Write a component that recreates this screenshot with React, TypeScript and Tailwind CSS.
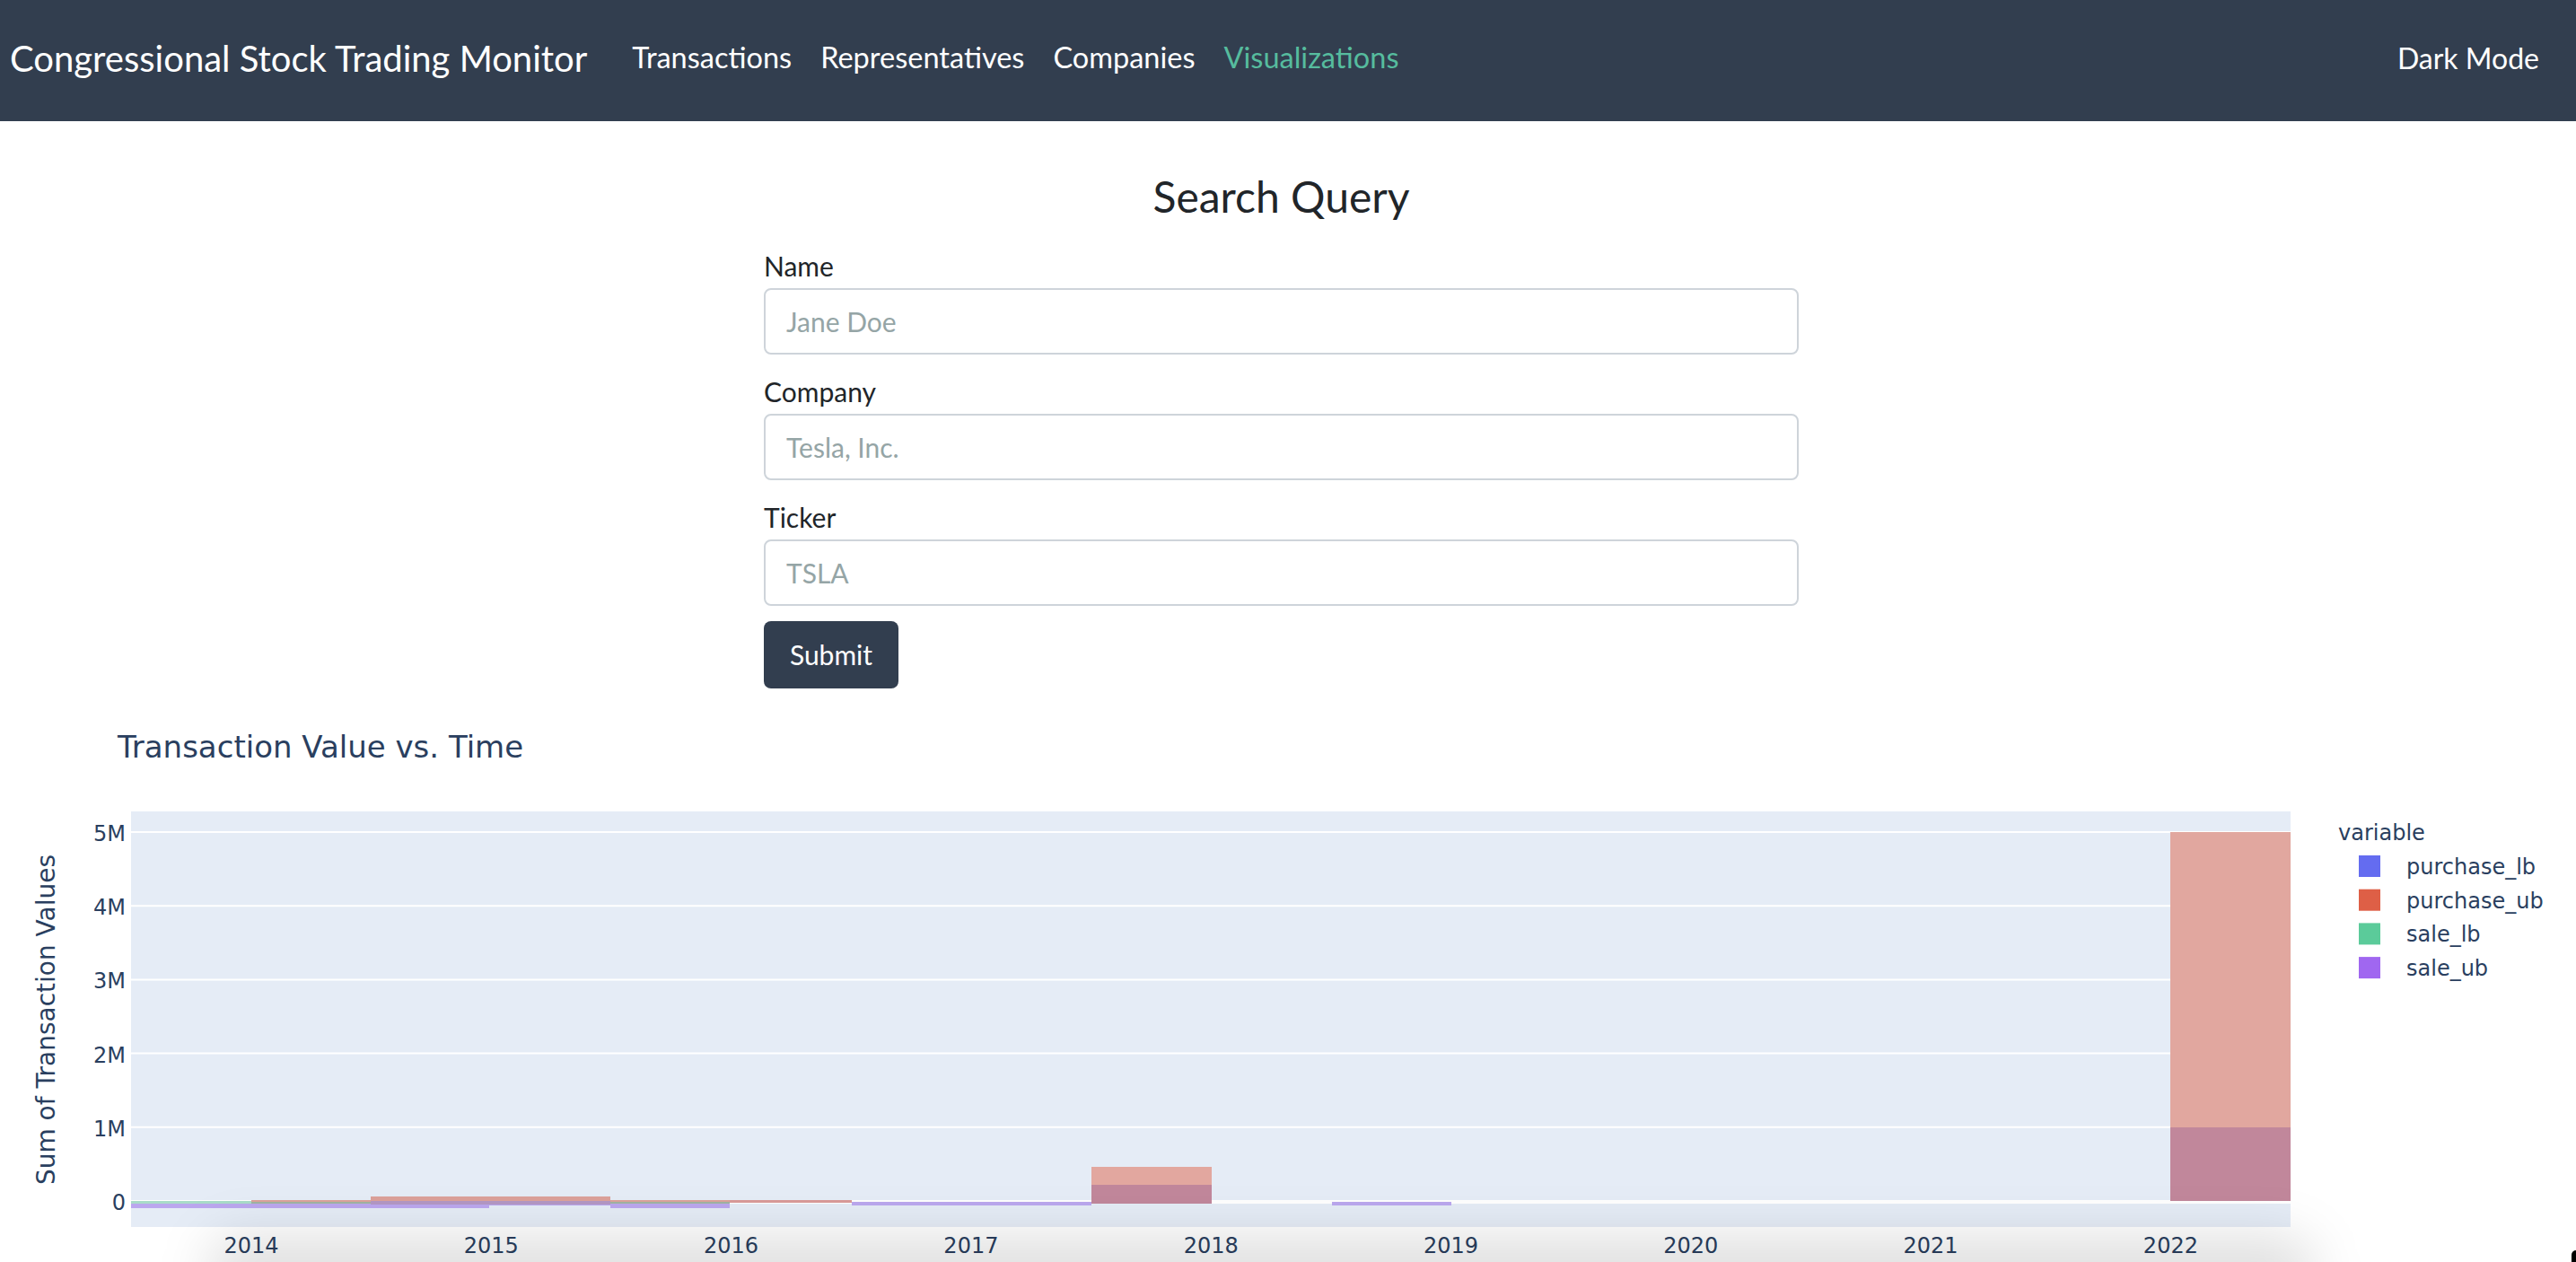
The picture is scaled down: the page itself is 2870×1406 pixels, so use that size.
import React from "react";

const navLinks = [
  { label: "Transactions", active: false },
  { label: "Representatives", active: false },
  { label: "Companies", active: false },
  { label: "Visualizations", active: true },
];

const fields = [
  { label: "Name", placeholder: "Jane Doe" },
  { label: "Company", placeholder: "Tesla, Inc." },
  { label: "Ticker", placeholder: "TSLA" },
];

// chart geometry, in page pixels (svg viewBox starts at the chart's top)
const ZERO = 1338;
const PER_M = 82.2;
const years = [2014, 2015, 2016, 2017, 2018, 2019, 2020, 2021, 2022];
const yearX = (i: number) => 280 + i * 267.3;

const legend = [
  { name: "purchase_lb", color: "#646cf0" },
  { name: "purchase_ub", color: "#de5f46" },
  { name: "sale_lb", color: "#5bcb9a" },
  { name: "sale_ub", color: "#a067f0" },
];

// [x1, x2, yTop, yBottom, fill]
const bars: [number, number, number, number, string][] = [
  [146, 280, 1338, 1341, "#a9dcc9"],
  [146, 280, 1341, 1346, "#bba7ee"],
  [280, 413, 1337, 1339, "#dca39c"],
  [280, 413, 1339, 1341, "#9fb3a2"],
  [280, 413, 1341, 1346, "#bba7ee"],
  [413, 680, 1333, 1338, "#dca19a"],
  [413, 680, 1338, 1342, "#b397c4"],
  [413, 545, 1342, 1346, "#bba7ee"],
  [545, 680, 1342, 1343, "#bba7ee"],
  [680, 813, 1337, 1339, "#dca39c"],
  [680, 813, 1339, 1341, "#9fb3a2"],
  [680, 813, 1341, 1346, "#bba7ee"],
  [813, 949, 1337, 1340, "#d99a98"],
  [949, 1216, 1339, 1343, "#bba7ee"],
  [1216, 1350, 1300, 1320, "#e2a79f"],
  [1216, 1350, 1320, 1341, "#c1879b"],
  [1484, 1617, 1339, 1343, "#bba7ee"],
  [2418, 2552, 927, 1256, "#e1a79f"],
  [2418, 2552, 1256, 1338, "#c1879b"],
];

function Chart() {
  const text = "#2a3f5f";
  return (
    <svg
      className="block w-full"
      width={2870}
      height={622}
      viewBox="0 784 2870 622"
      style={{ fontFamily: '"DejaVu Sans", Verdana, sans-serif' }}
    >
      <text x={131} y={844} fontSize={34} fill={text}>
        Transaction Value vs. Time
      </text>

      {/* plot area */}
      <rect x={146} y={904} width={2406} height={463} fill="#e5ecf6" />
      {[1, 2, 3, 4, 5].map((m) => (
        <line
          key={m}
          x1={146}
          x2={2552}
          y1={ZERO - m * PER_M}
          y2={ZERO - m * PER_M}
          stroke="#ffffff"
          strokeWidth={2}
        />
      ))}
      <line x1={146} x2={2552} y1={ZERO + 1} y2={ZERO + 1} stroke="#ffffff" strokeWidth={4} />

      {bars.map(([x1, x2, y1, y2, fill], i) => (
        <rect key={i} x={x1} y={y1} width={x2 - x1} height={y2 - y1} fill={fill} />
      ))}

      {/* y ticks */}
      {[0, 1, 2, 3, 4, 5].map((m) => (
        <text
          key={m}
          x={140}
          y={ZERO - m * PER_M + 10}
          fontSize={24}
          fill={text}
          textAnchor="end"
        >
          {m === 0 ? "0" : `${m}M`}
        </text>
      ))}
      <text
        x={61}
        y={1136}
        fontSize={28}
        fill={text}
        textAnchor="middle"
        transform="rotate(-90 61 1136)"
      >
        Sum of Transaction Values
      </text>

      {/* x ticks */}
      {years.map((y, i) => (
        <text key={y} x={yearX(i)} y={1396} fontSize={24} fill={text} textAnchor="middle">
          {y}
        </text>
      ))}

      {/* legend */}
      <text x={2605} y={936} fontSize={24} fill={text}>
        variable
      </text>
      {legend.map((l, i) => (
        <g key={l.name}>
          <rect x={2628} y={953 + i * 37.7} width={24} height={24} fill={l.color} />
          <text x={2681} y={974 + i * 37.7} fontSize={24} fill={text}>
            {l.name}
          </text>
        </g>
      ))}
    </svg>
  );
}

export default function App() {
  return (
    <div className="relative h-[1406px] overflow-hidden bg-white font-['Lato',sans-serif]">
      {/* top navbar */}
      <nav className="flex h-[135px] items-center bg-[#323e4f] pb-[6px] pl-[11px] pr-[25px]">
        <span className="mr-[34px] text-[40px] text-white">
          Congressional Stock Trading Monitor
        </span>
        <div className="flex">
          {navLinks.map((l) => (
            <span
              key={l.label}
              className={
                l.active
                  ? "px-[16px] text-[32.5px] text-[#56bc9e]"
                  : "px-[16px] text-[32.5px] text-white"
              }
            >
              {l.label}
            </span>
          ))}
        </div>
        <span className="ml-auto px-[16px] text-[32px] text-white">Dark Mode</span>
      </nav>

      {/* search form */}
      <main className="flex flex-col items-center pr-[15px] pt-[55px]">
        <h3 className="h-[58px] text-[48px] leading-[58px] text-[#212529]">Search Query</h3>
        <form className="mt-[26px] flex w-[1153px] flex-col">
          {fields.map((f) => (
            <div key={f.label} className="mb-[19px] flex flex-col">
              <label className="h-[45px] text-[30px] leading-[45px] text-[#212529]">
                {f.label}
              </label>
              <input
                className="mt-[2px] h-[74px] rounded-[8px] border-2 border-[#ced4da] bg-white px-[23px] text-[30px] text-[#212529] outline-none placeholder:text-[#95a5a6]"
                placeholder={f.placeholder}
              />
            </div>
          ))}
          <button
            type="button"
            className="-mt-[2px] h-[75px] w-[150px] rounded-[8px] bg-[#323e4f] text-[30px] text-white"
          >
            Submit
          </button>
        </form>
      </main>

      <div className="mt-[17px]">
        <Chart />
      </div>

      {/* soft shadow along the bottom edge */}
      <div className="pointer-events-none absolute bottom-[-50px] left-[230px] right-[290px] h-[80px] rounded-full bg-black/12 blur-[28px]" />
      <div className="pointer-events-none absolute bottom-0 right-0 h-[13px] w-[5px] rounded-tl-full bg-black" />
    </div>
  );
}
